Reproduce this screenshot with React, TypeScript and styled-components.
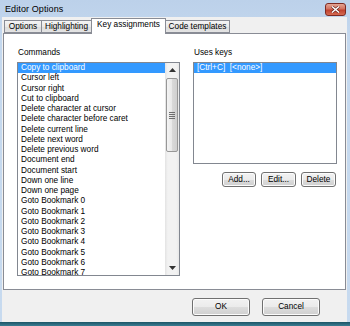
import React from 'react';
import styled, { createGlobalStyle } from 'styled-components';

const Global = createGlobalStyle`
  html, body { margin: 0; padding: 0; background: #2a6579; }
  body { width: 350px; height: 326px; overflow: hidden; font-family: "Liberation Sans", Arial, sans-serif; }
  * { box-sizing: border-box; }
`;

const Screen = styled.div`
  width: 350px;
  height: 326px;
  display: flex;
  flex-direction: column;
`;

const Window = styled.div`
  height: 322px;
  display: flex;
  flex-direction: column;
  background: linear-gradient(#bcd1ea, #c4d8ee 40px, #c7daef);
  padding: 0 3px 0 2px;
`;

const Desktop = styled.div`
  flex: 1;
  background: linear-gradient(#1c5466, #3b7d92);
`;

const TitleBar = styled.div`
  height: 17px;
  display: flex;
  align-items: center;
  justify-content: space-between;
  padding: 0 1px 0 3px;
`;

const Title = styled.span`
  font-size: 9px;
  color: #000;
  letter-spacing: 0.1px;
`;

const CloseBtn = styled.div`
  width: 21px;
  height: 13px;
  margin-top: 2px;
  border: 1px solid #7d2a22;
  border-radius: 3px;
  background: linear-gradient(#e3a594, #d2715f 45%, #c0412e 55%, #d46a52);
  display: flex;
  align-items: center;
  justify-content: center;
`;

const Client = styled.div`
  flex: 1;
  background: #f0f0f0;
  padding: 0 1px;
  display: flex;
  flex-direction: column;
`;

const TabRow = styled.div`
  height: 16px;
  display: flex;
  align-items: flex-end;
  padding-left: 1px;
  position: relative;
  z-index: 1;
`;

const Tab = styled.div<{ $w: number; $active?: boolean }>`
  width: ${p => p.$w}px;
  height: ${p => (p.$active ? 16 : 13)}px;
  margin-bottom: ${p => (p.$active ? -1 : 0)}px;
  border: 1px solid #898c95;
  border-bottom: ${p => (p.$active ? 'none' : '1px solid #898c95')};
  margin-left: -1px;
  background: ${p => (p.$active ? '#fff' : 'linear-gradient(#f4f4f4, #e9e9e9 50%, #dcdcdc 51%, #e4e4e4)')};
  font-size: 8.25px;
  line-height: ${p => (p.$active ? 12 : 11)}px;
  text-align: center;
  white-space: nowrap;
  color: #000;
  &:first-child { margin-left: 0; }
`;

const Panel = styled.div`
  height: 257px;
  border: 1px solid #898c95;
  background: #fff;
  padding: 14px 8px 0 13px;
  display: grid;
  grid-template-columns: 163px 144px;
  column-gap: 13px;
  align-items: start;
`;

const Column = styled.div`
  display: flex;
  flex-direction: column;
`;

const Label = styled.div`
  font-size: 8.25px;
  line-height: 10px;
  height: 10px;
  margin-bottom: 4px;
  margin-left: 1px;
  color: #000;
`;

const ListBox = styled.div<{ $h: number }>`
  height: ${p => p.$h}px;
  border: 1px solid #828790;
  background: #fff;
  display: flex;
  overflow: hidden;
`;

const Rows = styled.div`
  flex: 1;
  min-width: 0;
  overflow: hidden;
`;

const Row = styled.div<{ $sel?: boolean }>`
  height: 10.25px;
  line-height: 10.25px;
  font-size: 8.25px;
  padding-left: 3px;
  white-space: pre;
  color: ${p => (p.$sel ? '#fff' : '#000')};
  background: ${p => (p.$sel ? '#3399ff' : 'transparent')};
`;

const ScrollBar = styled.div`
  width: 14px;
  display: flex;
  flex-direction: column;
  background: linear-gradient(90deg, #e3e3e3, #f2f2f2 20%, #f2f2f2 80%, #e8e8e8);
`;

const Arrow = styled.div`
  height: 14px;
  display: flex;
  align-items: center;
  justify-content: center;
`;

const Track = styled.div`
  flex: 1;
  padding: 1px 0 0 1px;
`;

const Thumb = styled.div`
  width: 12px;
  height: 74px;
  border: 1px solid #979797;
  border-radius: 2px;
  background: linear-gradient(90deg, #f4f4f4, #e8e8e8 50%, #d9d9d9 51%, #cfcfcf);
  display: flex;
  align-items: center;
  justify-content: center;
`;

const ButtonRow = styled.div`
  display: flex;
  justify-content: flex-end;
  gap: 5px;
  margin-top: 8px;
  padding-right: 1px;
`;

const Button = styled.div<{ $w: number; $h: number }>`
  width: ${p => p.$w}px;
  height: ${p => p.$h}px;
  border: 1px solid #707070;
  border-radius: 3px;
  background: linear-gradient(#f2f2f2, #ebebeb 50%, #dddddd 51%, #cfcfcf);
  box-shadow: inset 0 0 0 1px #fcfcfc;
  font-size: 8.25px;
  line-height: ${p => p.$h - 2}px;
  text-align: center;
  color: #000;
`;

const Footer = styled.div`
  display: flex;
  justify-content: flex-end;
  gap: 12px;
  padding: 8px 26px 0 0;
`;

const commands = [
  'Copy to clipboard',
  'Cursor left',
  'Cursor right',
  'Cut to clipboard',
  'Delete character at cursor',
  'Delete character before caret',
  'Delete current line',
  'Delete next word',
  'Delete previous word',
  'Document end',
  'Document start',
  'Down one line',
  'Down one page',
  'Goto Bookmark 0',
  'Goto Bookmark 1',
  'Goto Bookmark 2',
  'Goto Bookmark 3',
  'Goto Bookmark 4',
  'Goto Bookmark 5',
  'Goto Bookmark 6',
  'Goto Bookmark 7',
];

export default function App() {
  return (
    <Screen>
      <Global />
      <Window>
        <TitleBar>
          <Title>Editor Options</Title>
          <CloseBtn>
            <svg width="9" height="7" viewBox="0 0 9 7">
              <path d="M1 0.5 L8 6.5 M8 0.5 L1 6.5" stroke="#5a1a14" strokeWidth="2.6" />
              <path d="M1 0.5 L8 6.5 M8 0.5 L1 6.5" stroke="#fff" strokeWidth="1.5" />
            </svg>
          </CloseBtn>
        </TitleBar>
        <Client>
          <TabRow>
            <Tab $w={38}>Options</Tab>
            <Tab $w={51}>Highlighting</Tab>
            <Tab $w={75} $active>Key assignments</Tab>
            <Tab $w={65}>Code templates</Tab>
          </TabRow>
          <Panel>
            <Column>
              <Label>Commands</Label>
              <ListBox $h={214}>
                <Rows>
                  {commands.map((c, i) => (
                    <Row key={c} $sel={i === 0}>{c}</Row>
                  ))}
                </Rows>
                <ScrollBar>
                  <Arrow>
                    <svg width="7" height="4" viewBox="0 0 7 4"><path d="M0 4 L3.5 0 L7 4 Z" fill="#333" /></svg>
                  </Arrow>
                  <Track>
                    <Thumb>
                      <svg width="6" height="7" viewBox="0 0 6 7">
                        <path d="M0 0.5H6M0 2.5H6M0 4.5H6M0 6.5H6" stroke="#6e6e6e" strokeWidth="1" />
                      </svg>
                    </Thumb>
                  </Track>
                  <Arrow>
                    <svg width="7" height="4" viewBox="0 0 7 4"><path d="M0 0 L3.5 4 L7 0 Z" fill="#333" /></svg>
                  </Arrow>
                </ScrollBar>
              </ListBox>
            </Column>
            <Column>
              <Label>Uses keys</Label>
              <ListBox $h={102}>
                <Rows>
                  <Row $sel>{'[Ctrl+C]  [<none>]'}</Row>
                </Rows>
              </ListBox>
              <ButtonRow>
                <Button $w={34} $h={15}>Add...</Button>
                <Button $w={35} $h={15}>Edit...</Button>
                <Button $w={35} $h={15}>Delete</Button>
              </ButtonRow>
            </Column>
          </Panel>
          <Footer>
            <Button $w={58} $h={18}>OK</Button>
            <Button $w={58} $h={18}>Cancel</Button>
          </Footer>
        </Client>
      </Window>
      <Desktop />
    </Screen>
  );
}
